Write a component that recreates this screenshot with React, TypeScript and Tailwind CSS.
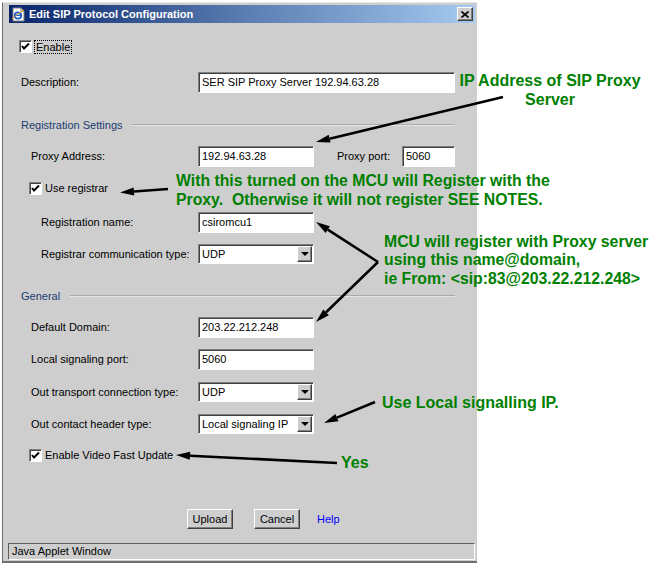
import React from "react";

// Classic Win2000 / AWT bevels
const SUNKEN =
  "border border-t-[#808080] border-l-[#808080] border-b-white border-r-white shadow-[inset_1px_1px_0_#404040]";
const RAISED =
  "border border-t-white border-l-white border-b-[#404040] border-r-[#404040] shadow-[inset_-1px_-1px_0_#808080]";

function Field({ value, className }: { value: string; className: string }) {
  return (
    <div className={`flex h-[21px] items-center bg-white pl-[3px] ${SUNKEN} ${className}`}>
      {value}
    </div>
  );
}

function Combo({ value }: { value: string }) {
  return (
    <div className={`flex h-[20px] w-[116px] items-center bg-white ${SUNKEN}`}>
      <span className="flex-1 pl-[3px]">{value}</span>
      <div className={`mr-[1px] flex h-[16px] w-[15px] items-center justify-center bg-[#cecece] ${RAISED}`}>
        <div className="h-0 w-0 border-x-[4px] border-t-[4px] border-x-transparent border-t-black" />
      </div>
    </div>
  );
}

function Check() {
  return (
    <div className={`h-[13px] w-[13px] shrink-0 bg-white ${SUNKEN}`}>
      <svg width="11" height="11" viewBox="0 0 11 11">
        <path d="M2 5 L4 7.5 L9 2.5" stroke="black" strokeWidth="2" fill="none" />
      </svg>
    </div>
  );
}

function Row({
  label,
  rowCls,
  labelCls,
  children,
}: {
  label: string;
  rowCls: string;
  labelCls: string;
  children: React.ReactNode;
}) {
  return (
    <div className={`flex items-center ${rowCls}`}>
      <span className={labelCls}>{label}</span>
      {children}
    </div>
  );
}

function Arrow({ x1, y1, x2, y2 }: { x1: number; y1: number; x2: number; y2: number }) {
  const a = Math.atan2(y2 - y1, x2 - x1);
  const len = 14;
  const hw = 4;
  const bx = x2 - len * Math.cos(a);
  const by = y2 - len * Math.sin(a);
  const px = -Math.sin(a) * hw;
  const py = Math.cos(a) * hw;
  return (
    <g>
      <line x1={x1} y1={y1} x2={bx} y2={by} stroke="black" strokeWidth={2.5} />
      <polygon points={`${x2},${y2} ${bx + px},${by + py} ${bx - px},${by - py}`} fill="black" />
    </g>
  );
}

export default function App() {
  return (
    <div className="relative h-[565px] w-[668px] overflow-hidden bg-white font-['Liberation_Sans',Arial,sans-serif] text-[11px] text-black">
      <div className="ml-[2px] mt-[2px] flex h-[561px] w-[475px] flex-col border-l border-t border-b-2 border-l-[#6b6b6b] border-t-[#e8e8e8] border-b-[#6e6e6e] bg-[#cecece]">
        {/* title bar */}
        <div className="ml-[6px] mt-[2px] flex h-[18px] w-[466px] items-center bg-gradient-to-r from-[#0a246a] via-[#5a7cb0] to-[#a6caf0] pl-[2px] pr-[2px]">
          <svg width="15" height="15" viewBox="0 0 15 15" className="shrink-0">
            <path d="M2 1 H10 L13 4 V14 H2 Z" fill="white" stroke="#808080" />
            <path d="M10 1 V4 H13" fill="none" stroke="#808080" />
            <circle cx="7" cy="8.5" r="3.2" fill="none" stroke="#1f5fd0" strokeWidth="1.8" />
            <line x1="4" y1="8.3" x2="10" y2="8.3" stroke="#1f5fd0" strokeWidth="1.4" />
            <path d="M1 12 C4 9 9 5 13 3" fill="none" stroke="#e8a020" strokeWidth="1" />
          </svg>
          <span className="ml-[3px] flex-1 text-[11px] font-bold text-white">
            Edit SIP Protocol Configuration
          </span>
          <div className={`flex h-[14px] w-[16px] items-center justify-center bg-[#cecece] ${RAISED}`}>
            <svg width="8" height="7" viewBox="0 0 8 7">
              <path d="M0.5 0.5 L7.5 6.5 M7.5 0.5 L0.5 6.5" stroke="black" strokeWidth="1.6" />
            </svg>
          </div>
        </div>

        {/* Enable */}
        <div className="mt-[17px] flex h-[13px] items-center pl-[16px]">
          <Check />
          <span className="ml-[2px] border border-dotted border-black px-[1px] leading-[12px]">Enable</span>
        </div>

        <Row label="Description:" rowCls="mt-[19px] pl-[18px]" labelCls="w-[177px]">
          <Field value="SER SIP Proxy Server 192.94.63.28" className="w-[257px]" />
        </Row>

        {/* Registration Settings */}
        <div className="mt-[25px] flex h-[14px] items-center pl-[18px]">
          <span className="w-[111px] text-[#1b3d72]">Registration Settings</span>
          <div className="h-[2px] w-[323px] border-t border-b border-t-[#a8a8a8] border-b-[#e6e6e6]" />
        </div>

        <Row label="Proxy Address:" rowCls="mt-[14px] pl-[28px]" labelCls="w-[167px]">
          <Field value="192.94.63.28" className="w-[116px]" />
          <span className="ml-[23px] w-[65px]">Proxy port:</span>
          <Field value="5060" className="w-[53px]" />
        </Row>

        <div className="mt-[15px] flex h-[13px] items-center pl-[26px]">
          <Check />
          <span className="ml-[3px]">Use registrar</span>
        </div>

        <Row label="Registration name:" rowCls="mt-[17px] pl-[38px]" labelCls="w-[157px]">
          <Field value="csiromcu1" className="w-[116px]" />
        </Row>

        <Row label="Registrar communication type:" rowCls="mt-[11px] pl-[38px]" labelCls="w-[157px]">
          <Combo value="UDP" />
        </Row>

        {/* General */}
        <div className="mt-[25px] flex h-[14px] items-center pl-[18px]">
          <span className="w-[49px] text-[#1b3d72]">General</span>
          <div className="h-[2px] w-[385px] border-t border-b border-t-[#a8a8a8] border-b-[#e6e6e6]" />
        </div>

        <Row label="Default Domain:" rowCls="mt-[14px] pl-[28px]" labelCls="w-[167px]">
          <Field value="203.22.212.248" className="w-[116px]" />
        </Row>

        <Row label="Local signaling port:" rowCls="mt-[11px] pl-[28px]" labelCls="w-[167px]">
          <Field value="5060" className="w-[116px]" />
        </Row>

        <Row label="Out transport connection type:" rowCls="mt-[12px] pl-[28px]" labelCls="w-[167px]">
          <Combo value="UDP" />
        </Row>

        <Row label="Out contact header type:" rowCls="mt-[12px] pl-[28px]" labelCls="w-[167px]">
          <Combo value="Local signaling IP" />
        </Row>

        <div className="mt-[15px] flex h-[13px] items-center pl-[26px]">
          <Check />
          <span className="ml-[3px]">Enable Video Fast Update</span>
        </div>

        {/* buttons */}
        <div className="mt-[47px] flex h-[20px] items-center pl-[184px]">
          <div className={`flex h-[20px] w-[46px] items-center justify-center ${RAISED}`}>Upload</div>
          <div className={`ml-[21px] flex h-[20px] w-[46px] items-center justify-center ${RAISED}`}>Cancel</div>
          <span className="ml-[17px] text-[#0000ff]">Help</span>
        </div>

        {/* status bar */}
        <div className="ml-[5px] mt-[14px] flex h-[17px] w-[467px] items-center border border-t-[#606060] border-l-[#606060] border-b-white border-r-white pl-[3px]">
          Java Applet Window
        </div>
      </div>

      {/* annotations */}
      <div className="absolute left-[440px] top-[71px] w-[220px] whitespace-nowrap text-center text-[16px] font-bold leading-[19px] text-[#008000]">
        IP Address of SIP Proxy
        <br />
        Server
      </div>
      <div className="absolute left-[176px] top-[171px] whitespace-pre text-[15.8px] font-bold leading-[19px] text-[#008000]">
        {"With this turned on the MCU will Register with the\nProxy.  Otherwise it will not register SEE NOTES."}
      </div>
      <div className="absolute left-[384px] top-[233px] whitespace-pre text-[15.8px] font-bold leading-[18.3px] text-[#008000]">
        {"MCU will register with Proxy server\nusing this name@domain,\nie From: <sip:83@203.22.212.248>"}
      </div>
      <div className="absolute left-[382px] top-[394px] whitespace-nowrap text-[16px] font-bold leading-[18px] text-[#008000]">
        Use Local signalling IP.
      </div>
      <div className="absolute left-[341px] top-[454px] text-[16px] font-bold leading-[18px] text-[#008000]">
        Yes
      </div>

      <svg className="pointer-events-none absolute inset-0" width="668" height="565">
        <Arrow x1={503} y1={97} x2={316} y2={142} />
        <Arrow x1={168} y1={189} x2={120} y2={192.5} />
        <Arrow x1={378} y1={262} x2={316} y2={222} />
        <Arrow x1={378} y1={262} x2={316} y2={322} />
        <Arrow x1={375} y1={402} x2={324} y2={423} />
        <Arrow x1={337} y1={463} x2={176} y2={455} />
      </svg>
    </div>
  );
}
